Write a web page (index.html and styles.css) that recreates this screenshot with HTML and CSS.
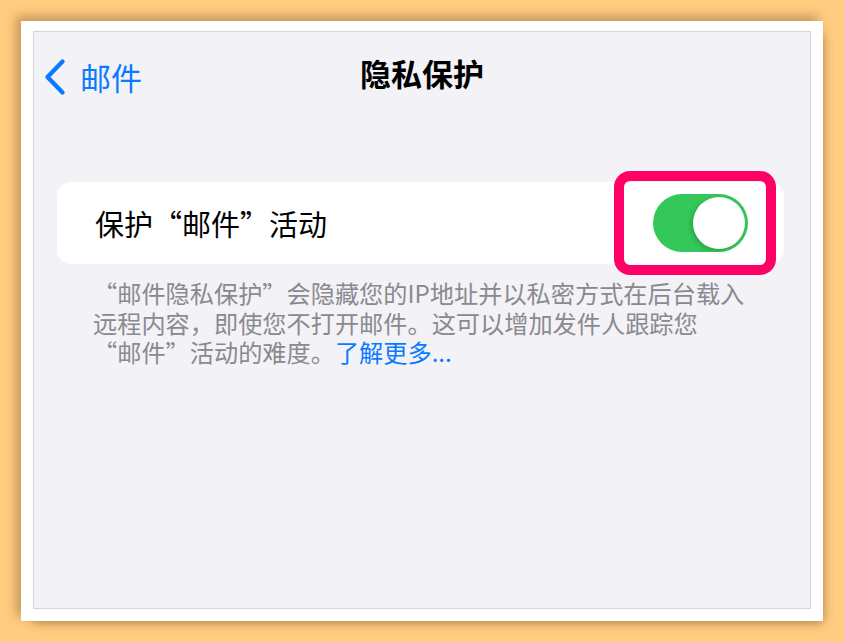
FILE: index.html
```html
<!DOCTYPE html>
<html lang="zh-CN">
<head>
    <meta charset="UTF-8">
    <meta name="viewport" content="width=device-width, initial-scale=1.0">
    <title>隐私保护</title>
    <link rel="stylesheet" href="styles.css">
</head>
<body>
    <div class="frame">
        <div class="screen">
            <div class="nav">
                <a class="back" href="#">
                    <svg class="chevron" width="24" height="38" viewBox="0 0 24 38">
                        <path d="M19.5 3.5 L4.5 19 L19.5 34.5" fill="none" stroke="#0a7aff" stroke-width="4.4" stroke-linecap="round" stroke-linejoin="round"/>
                    </svg>
                    <span>邮件</span>
                </a>
                <h1>隐私保护</h1>
            </div>

            <div class="card">
                <span class="label">保护“邮件”活动</span>
                <div class="highlight">
                    <div class="toggle on"><div class="knob"></div></div>
                </div>
            </div>

            <div class="note">
                <span class="line">“邮件隐私保护”会隐藏您的IP地址并以私密方式在后台载入</span>
                <span class="line">远程内容，即使您不打开邮件。这可以增加发件人跟踪您</span>
                <span class="line">“邮件”活动的难度。<a href="#">了解更多...</a></span>
            </div>
        </div>
    </div>
</body>
</html>
```

FILE: styles.css
```css
body {
    margin: 0;
    padding: 21px;
    background-color: #ffcc80;
    font-family: "Noto Sans CJK SC", "Noto Sans", sans-serif;
    height: 642px;
    box-sizing: border-box;
    overflow: hidden;
}
.frame {
    width: 802px;
    height: 600px;
    box-sizing: border-box;
    background: #fff;
    padding: 10px 12px 12px 12px;
    box-shadow: -5px -5px 10px rgba(90, 60, 20, 0.35), 6px 8px 10px -6px rgba(90, 60, 20, 0.45);
}
.screen {
    height: 100%;
    box-sizing: border-box;
    background: #f2f2f7;
    border: 1px solid #d6d6da;
}
.nav {
    position: relative;
    height: 88px;
    display: flex;
    align-items: center;
    justify-content: center;
}
.back {
    position: absolute;
    left: 9px;
    top: 22px;
    display: flex;
    align-items: center;
    gap: 13px;
    color: #0a7aff;
    text-decoration: none;
    font-size: 31px;
}
.chevron {
    display: block;
}
h1 {
    margin: 0;
    margin-top: -8px;
    font-size: 31px;
    font-weight: bold;
    color: #000;
}
.card {
    margin: 62px 26px 0 23px;
    height: 82px;
    background: #fff;
    border-radius: 14px;
    display: flex;
    align-items: center;
    justify-content: space-between;
    padding-left: 38px;
}
.label {
    font-size: 29px;
    color: #000;
}
.highlight {
    width: 162px;
    height: 104px;
    box-sizing: border-box;
    border: 10px solid #ff0066;
    border-radius: 16px;
    margin-right: 8px;
    padding-left: 10px;
    display: flex;
    align-items: center;
    justify-content: center;
}
.toggle {
    width: 95px;
    height: 58px;
    border-radius: 29px;
    background: #34c759;
    position: relative;
}
.knob {
    position: absolute;
    top: 3px;
    right: 3px;
    width: 52px;
    height: 52px;
    border-radius: 50%;
    background: #fff;
    box-shadow: -2px 2px 5px rgba(0, 0, 0, 0.18);
}
.note {
    margin: 14px 0 0 59px;
    font-size: 24.2px;
    line-height: 29.5px;
    color: #8a8a8e;
}
.line {
    display: block;
    height: 29.5px;
    white-space: nowrap;
}
.note a {
    color: #0a7aff;
    text-decoration: none;
}
```
